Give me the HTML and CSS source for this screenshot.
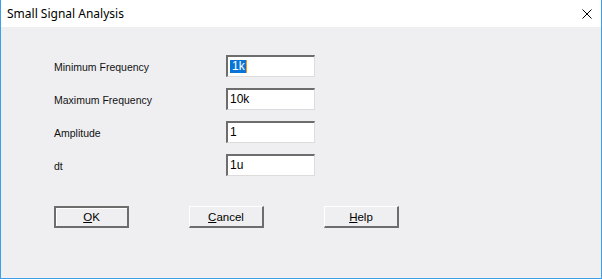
FILE: index.html
```html
<!DOCTYPE html>
<html lang="en">
<head>
    <meta charset="UTF-8"/>
    <link rel="stylesheet" href="styles.css">
</head>
<body>
<main class="dialog">
    <header class="dialog__title">
        <span class="dialog__caption">Small Signal Analysis</span>
        <button class="dialog__close" aria-label="Close">
            <svg width="10" height="10" viewBox="0 0 10 10" aria-hidden="true">
                <path d="M0.5 0.5 L9.5 9.5 M9.5 0.5 L0.5 9.5" stroke="#000" stroke-width="1" fill="none"/>
            </svg>
        </button>
    </header>
    <section class="dialog__body">
        <div class="form">
            <label class="form__label">Minimum Frequency</label>
            <div class="field"><span class="field__selected">1k</span></div>
            <label class="form__label">Maximum Frequency</label>
            <div class="field">10k</div>
            <label class="form__label">Amplitude</label>
            <div class="field">1</div>
            <label class="form__label">dt</label>
            <div class="field">1u</div>
        </div>
        <div class="actions">
            <button class="btn btn--default"><u>O</u>K</button>
            <button class="btn"><u>C</u>ancel</button>
            <button class="btn"><u>H</u>elp</button>
        </div>
    </section>
</main>
</body>
</html>
```

FILE: styles.css
```css
html, body {
    margin: 0;
    padding: 0;
    background: #ffffff;
}

.dialog {
    box-sizing: border-box;
    width: 602px;
    height: 279px;
    border: 1px solid #3c9fe9;
    border-top: none;
    background: #efeff2;
    display: flex;
    flex-direction: column;
    font-family: "Liberation Sans", Arial, sans-serif;
    color: #000000;
}

.dialog__title {
    height: 27px;
    background: #ffffff;
    display: flex;
    align-items: center;
    justify-content: space-between;
    padding: 0 9px 0 6px;
}

.dialog__caption {
    font-family: "Noto Sans", sans-serif;
    font-size: 12px;
    margin-top: -1px;
}

.dialog__close {
    background: none;
    border: none;
    padding: 0;
    width: 10px;
    height: 10px;
    display: flex;
    margin-top: 1px;
}

.dialog__body {
    padding: 28px 0 0 53px;
}

.form {
    display: grid;
    grid-template-columns: 172px 89px;
    grid-auto-rows: 22px;
    row-gap: 11px;
    align-items: center;
}

.form__label {
    font-size: 10.5px;
    padding-top: 1px;
    color: #111111;
}

.field {
    box-sizing: border-box;
    height: 22px;
    background: #ffffff;
    border-top: 2px solid #6d6d6d;
    border-left: 2px solid #6d6d6d;
    border-right: 1px solid #dcdcdc;
    border-bottom: 1px solid #dcdcdc;
    font-size: 12px;
    line-height: 18px;
    padding: 0 0 0 2px;
}

.field__selected {
    display: inline-block;
    background: #0a74d6;
    color: #ffffff;
    padding: 0 1px 0 2px;
    border-right: 1px solid #f7941d;
    line-height: 13px;
    margin-top: 1px;
}

.actions {
    display: flex;
    gap: 60px;
    margin-top: 30px;
}

.btn {
    box-sizing: border-box;
    width: 75px;
    height: 22px;
    background: #efeff2;
    border-top: 1px solid #ffffff;
    border-left: 1px solid #ffffff;
    border-right: 2px solid #6d6d6d;
    border-bottom: 2px solid #6d6d6d;
    font-family: "Liberation Sans", Arial, sans-serif;
    font-size: 11.5px;
    color: #000000;
    padding: 0;
}

.btn--default {
    border: 2px solid #6d6d6d;
    box-shadow: inset 1px 1px 0 #ffffff;
}
```
